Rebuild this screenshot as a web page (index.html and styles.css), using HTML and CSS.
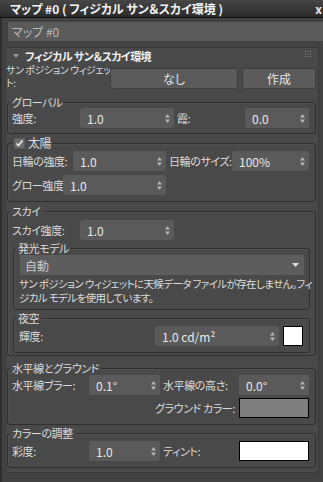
FILE: index.html
```html
<!DOCTYPE html>
<html lang="ja">
<head>
    <meta charset="UTF-8">
    <meta name="viewport" content="width=device-width, initial-scale=1.0">
    <title>マップ #0</title>
    <link rel="stylesheet" href="styles.css">
</head>
<body>

    <div class="titlebar">
        <span>マップ #0 ( フィジカル サン＆スカイ環境 )</span>
        <span class="close">x</span>
    </div>

    <div class="main">
        <div class="mapname">マップ #0</div>

        <div class="rollout">
            <div class="rollout-head">
                <svg class="caret" width="6" height="4" viewBox="0 0 6 4"><path d="M0 0H6L3 4z" fill="#9a9a9a"/></svg>
                <span>フィジカル サン＆スカイ環境</span>
                <svg class="grip" width="6" height="6" viewBox="0 0 6 6" fill="#8c8c8c">
                    <rect x="0" y="0" width="1" height="1"/><rect x="2.5" y="0" width="1" height="1"/><rect x="5" y="0" width="1" height="1"/>
                    <rect x="0" y="2.5" width="1" height="1"/><rect x="2.5" y="2.5" width="1" height="1"/><rect x="5" y="2.5" width="1" height="1"/>
                    <rect x="0" y="5" width="1" height="1"/><rect x="2.5" y="5" width="1" height="1"/><rect x="5" y="5" width="1" height="1"/>
                </svg>
            </div>

            <div class="widget-row">
                <span class="widget-label">サン ポジション ウィジェッ<br>ト:</span>
                <button class="btn btn-wide">なし</button>
                <button class="btn btn-small">作成</button>
            </div>

            <!-- global -->
            <fieldset class="group">
                <legend>グローバル</legend>
                <div class="row cols-global">
                    <span>強度:</span>
                    <div class="spin">1.0<svg width="5" height="9" viewBox="0 0 5 9"><path d="M0 3.5L2.5 0 5 3.5zM0 5.5L2.5 9 5 5.5z"/></svg></div>
                    <span class="lbl2">霞:</span>
                    <div class="spin">0.0<svg width="5" height="9" viewBox="0 0 5 9"><path d="M0 3.5L2.5 0 5 3.5zM0 5.5L2.5 9 5 5.5z"/></svg></div>
                </div>
            </fieldset>

            <!-- sun -->
            <fieldset class="group group-sun">
                <legend class="check-legend">
                    <svg class="check" width="11" height="11" viewBox="0 0 11 11"><rect x="0.5" y="0.5" width="10" height="10" fill="#6e6e6e" stroke="#5a5a5a"/><path d="M2.5 5.5L4.5 7.5 8.5 2.5" fill="none" stroke="#ececec" stroke-width="1.6"/></svg>
                    太陽
                </legend>
                <div class="row cols-sun">
                    <span>日輪の強度:</span>
                    <div class="spin">1.0<svg width="5" height="9" viewBox="0 0 5 9"><path d="M0 3.5L2.5 0 5 3.5zM0 5.5L2.5 9 5 5.5z"/></svg></div>
                    <span class="lbl2">日輪のサイズ:</span>
                    <div class="spin">100%<svg width="5" height="9" viewBox="0 0 5 9"><path d="M0 3.5L2.5 0 5 3.5zM0 5.5L2.5 9 5 5.5z"/></svg></div>
                </div>
                <div class="row cols-glow">
                    <span>グロー強度:</span>
                    <div class="spin">1.0<svg width="5" height="9" viewBox="0 0 5 9"><path d="M0 3.5L2.5 0 5 3.5zM0 5.5L2.5 9 5 5.5z"/></svg></div>
                </div>
            </fieldset>

            <!-- sky -->
            <fieldset class="group group-sky">
                <legend>スカイ</legend>
                <div class="row cols-sky">
                    <span>スカイ強度:</span>
                    <div class="spin">1.0<svg width="5" height="9" viewBox="0 0 5 9"><path d="M0 3.5L2.5 0 5 3.5zM0 5.5L2.5 9 5 5.5z"/></svg></div>
                </div>

                <fieldset class="subgroup">
                    <legend>発光モデル</legend>
                    <div class="dropdown">
                        <span>自動</span>
                        <svg width="7" height="4" viewBox="0 0 7 4"><path d="M0 0H7L3.5 4z" fill="#e0e0e0"/></svg>
                    </div>
                    <p class="note">サン ポジション ウィジェットに天候データ ファイルが存在しません。フィ<br>ジカル モデルを使用しています。</p>
                </fieldset>

                <fieldset class="subgroup subgroup-night">
                    <legend>夜空</legend>
                    <div class="row cols-night">
                        <span>輝度:</span>
                        <div class="spin">1.0 cd/m²<svg width="5" height="9" viewBox="0 0 5 9"><path d="M0 3.5L2.5 0 5 3.5zM0 5.5L2.5 9 5 5.5z"/></svg></div>
                        <div class="swatch swatch-white swatch-sq"></div>
                    </div>
                </fieldset>
            </fieldset>

            <!-- horizon -->
            <fieldset class="group group-horizon">
                <legend>水平線とグラウンド</legend>
                <div class="row cols-horizon">
                    <span>水平線ブラー:</span>
                    <div class="spin">0.1°<svg width="5" height="9" viewBox="0 0 5 9"><path d="M0 3.5L2.5 0 5 3.5zM0 5.5L2.5 9 5 5.5z"/></svg></div>
                    <span class="lbl2">水平線の高さ:</span>
                    <div class="spin">0.0°<svg width="5" height="9" viewBox="0 0 5 9"><path d="M0 3.5L2.5 0 5 3.5zM0 5.5L2.5 9 5 5.5z"/></svg></div>
                </div>
                <div class="row cols-ground">
                    <span class="lbl-right">グラウンド カラー:</span>
                    <div class="swatch swatch-gray"></div>
                </div>
            </fieldset>

            <!-- color -->
            <fieldset class="group group-color">
                <legend>カラーの調整</legend>
                <div class="row cols-horizon">
                    <span>彩度:</span>
                    <div class="spin">1.0<svg width="5" height="9" viewBox="0 0 5 9"><path d="M0 3.5L2.5 0 5 3.5zM0 5.5L2.5 9 5 5.5z"/></svg></div>
                    <span class="lbl2">ティント:</span>
                    <div class="swatch swatch-white"></div>
                </div>
            </fieldset>
        </div>
    </div>

</body>
</html>
```

FILE: styles.css
```css
*{
    box-sizing: border-box;
}
body{
    margin: 0;
    height: 482px;
    overflow: hidden;
    background-color: #424242;
    font-family: "Noto Sans CJK JP", "Liberation Sans", sans-serif;
    font-size: 12px;
    font-feature-settings: "palt";
    color: #dcdcdc;
}
.titlebar{
    height: 18px;
    display: flex;
    justify-content: space-between;
    align-items: center;
    padding: 0 1px 0 10px;
    background: linear-gradient(#464646, #2b2b2b);
    border-bottom: 1px solid #121212;
    color: #f4f4f4;
    font-weight: bold;
    line-height: 14px;
}
.close{
    color: #e8e8e8;
}
.main{
    height: 464px;
    border-left: 2px solid #2e2e2e;
    padding-top: 4px;
    font-size: 11px;
    letter-spacing: -0.4px;
    white-space: nowrap;
}
.mapname{
    margin-left: 6px;
    height: 19px;
    line-height: 19px;
    padding-left: 4px;
    background: #5a5a5a;
    color: #b8b8b8;
    font-size: 12px;
    letter-spacing: 0;
}
.rollout{
    margin: 6px 0 0 3px;
    width: 314px;
    height: 426px;
    padding: 0 2px 0 1px;
    background: #494949;
    border: 1px solid #3a3a3a;
    border-radius: 3px;
}
.rollout-head{
    display: flex;
    align-items: center;
    padding: 2px 5px 0 6px;
    line-height: 12px;
    font-weight: bold;
    letter-spacing: -0.6px;
    color: #f0f0f0;
}
.caret{
    margin-right: 6px;
}
.grip{
    margin-left: auto;
    margin-top: -4px;
}
.widget-row{
    display: flex;
    align-items: flex-start;
    margin-top: 1px;
}
.widget-label{
    width: 104px;
    margin-left: -1px;
    line-height: 13px;
    font-size: 10px;
    letter-spacing: -0.4px;
    overflow: hidden;
}
.btn{
    margin-top: 5px;
    height: 21px;
    padding: 0;
    background: #5b5b5b;
    border: 1px solid #3d3d3d;
    border-radius: 3px;
    color: #e4e4e4;
    font: inherit;
    font-size: 12px;
    letter-spacing: 0;
}
.btn-wide{
    width: 128px;
}
.btn-small{
    margin-left: 4px;
    width: 74px;
}
.group{
    margin: 7px 0 0 0;
    padding: 0 6px 5px 4px;
    min-width: 0;
    border: 1px solid #2f2f2f;
    border-radius: 3px;
    box-shadow: inset 1px 1px 0 #505050;
}
.group legend{
    padding: 0 2px;
    margin-left: -2px;
    line-height: 12px;
}
.group-sun{
    margin-top: 3px;
    padding-bottom: 6px;
}
.group-sun .row:first-of-type{
    margin-top: 2px;
}
.check-legend{
    display: flex;
    align-items: center;
}
.group .check-legend{
    margin-left: 0;
    font-size: 12px;
}
.check{
    margin-right: 3px;
}
.group-sky{
    margin-top: 3px;
    padding-bottom: 2px;
}
.group-sky > .row{
    margin-top: 3px;
}
.group-horizon{
    margin-top: 6px;
    padding-bottom: 6px;
}
.group-horizon .row:first-of-type{
    margin-top: 1px;
}
.group-color{
    margin-top: 2px;
    padding-bottom: 6px;
}
.group-color .row{
    margin-top: 2px;
}
.row{
    display: grid;
    align-items: center;
    height: 20px;
}
.row + .row{
    margin-top: 4px;
}
.cols-global{ grid-template-columns: 68px 94px 71px 1fr; }
.cols-sky{ grid-template-columns: 68px 94px; }
.cols-sun{ grid-template-columns: 61px 93px 66px 1fr; }
.cols-glow{ grid-template-columns: 51px 103px; }
.cols-horizon{ grid-template-columns: 77px 71px 79px 1fr; }
.cols-ground{ grid-template-columns: 1fr 70px; }
.cols-night{ grid-template-columns: 136px 124px 1fr; }
.group-horizon .row + .row{
    margin-top: 3px;
}
.lbl2{
    padding-left: 3px;
}
.lbl-right{
    text-align: right;
    padding-right: 4px;
}
.spin{
    height: 20px;
    display: flex;
    align-items: center;
    justify-content: space-between;
    padding: 0 4px 0 7px;
    background: #5a5a5a;
    border-radius: 2px;
    color: #e8e8e8;
    font-size: 12px;
    letter-spacing: 0;
}
.spin svg{
    fill: #b4b4b4;
}
.swatch{
    height: 20px;
    border: 1px solid #000;
}
.swatch-white{
    background: #fff;
}
.swatch-gray{
    background: #7f7f7f;
}
.swatch-sq{
    width: 20px;
    margin-left: 4px;
}
.subgroup{
    margin: 2px -1px 0 1px;
    padding: 0 5px 4px 5px;
    min-width: 0;
    border: 1px solid #2f2f2f;
    border-radius: 3px;
    box-shadow: inset 1px 1px 0 #505050;
}
.subgroup legend{
    padding: 0 2px;
    margin-left: -3px;
    line-height: 12px;
}
.dropdown{
    margin: 1px 0 0 1px;
    height: 20px;
    display: flex;
    align-items: center;
    justify-content: space-between;
    padding: 0 5px 0 5px;
    background: #5d5d5d;
    color: #c8c8c8;
    font-size: 12px;
    letter-spacing: 0;
}
.note{
    margin: 2px 0 0 0;
    line-height: 14px;
    font-size: 10.5px;
    letter-spacing: -0.6px;
}
.subgroup-night{
    padding-bottom: 6px;
}
.subgroup-night .row{
    margin-top: 2px;
}
```
